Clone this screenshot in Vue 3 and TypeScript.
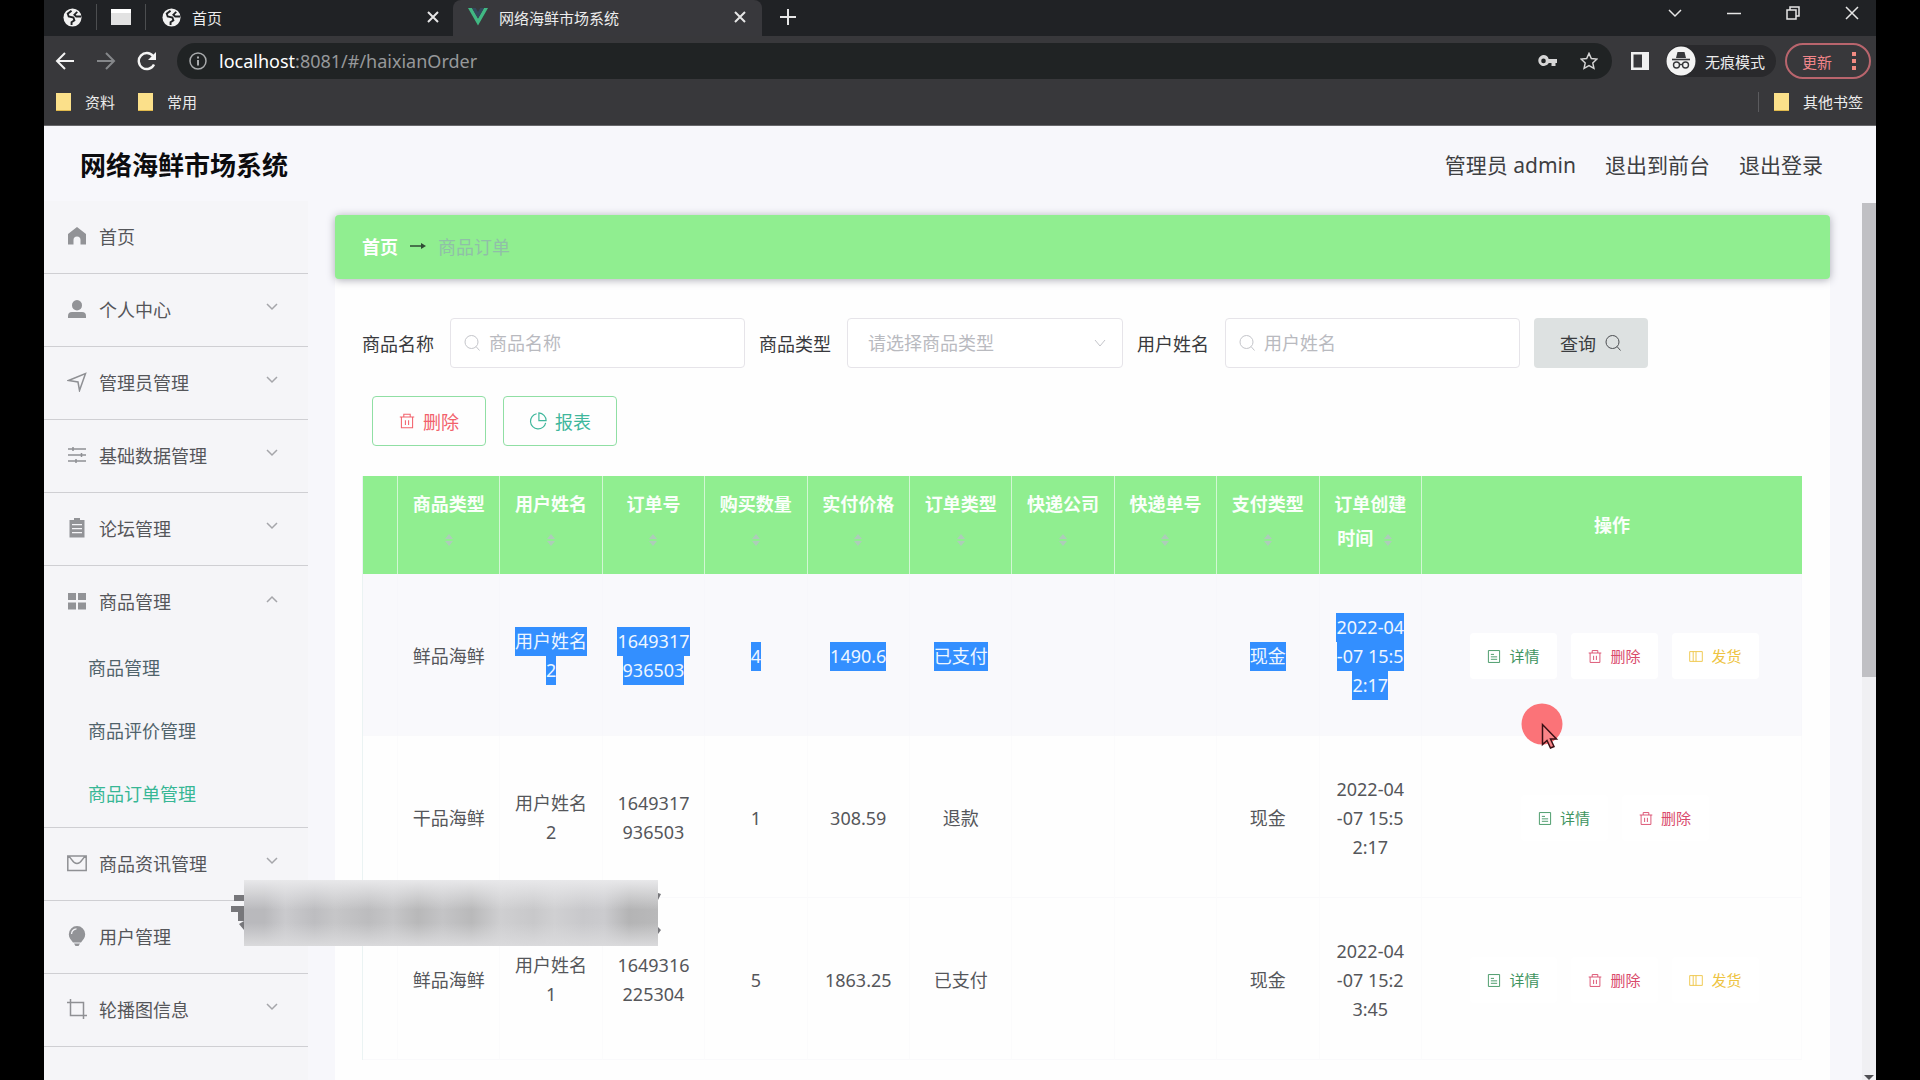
<script setup lang="ts">
import { ref } from 'vue'

interface Glyph { d: string; solid?: boolean }
interface MenuItem { label: string; icon: string; arrow?: boolean; children?: string[] }
interface Cell { lines: string[]; marked?: boolean }
interface Order { cells: Cell[]; ship: boolean; hover?: boolean }

const glyphs: Record<string, Glyph> = {
  home: { solid: true, d: 'M10 1 19 8v10.500h-5.500V14a3.500 3.500 0 0 0-7 0v4.500H1V8z' },
  user: { solid: true, d: 'M10 1a5 5 0 0 1 5 5.500 5 5 0 0 1-10 0A5 5 0 0 1 10 1zM1 19v-2a4 4 0 0 1 4-4h10a4 4 0 0 1 4 4v2z' },
  plane: { d: 'M1.500 8.500 18.500 1.500 12.500 18.500 11 10z' },
  sliders: { d: 'M1 4h18M1 10h18M1 16h18M6 2v4M5 4h2M14.500 8v4M13.500 10h2M9 14v4M8 16h2' },
  clipboard: { solid: true, d: 'M7 0h6v2h4.500v17.500h-15V2H7zM5 6v1.300h10V6zM5 10v1.300h10V10zM5 14v1.300h10V14z' },
  grid: { solid: true, d: 'M1 2h8v7H1zM11 2h8v7h-8zM1 11.500h8v7H1zM11 11.500h8v7h-8z' },
  mail: { d: 'M.800 3h18.400v14.500H.800zM1 3.500c4 .500 4 7 9 7s5-6.500 9-7' },
  bulb: { solid: true, d: 'M10 0a8.200 8.200 0 0 1 8.200 8.200c0 3.500-2.200 5.600-4.200 8.300H6C4 13.800 1.800 11.700 1.800 8.200A8.200 8.200 0 0 1 10 0zM4 8h1.200c0-2.600 1.800-4.400 4.300-4.600V2.200C6.300 2.400 4 4.800 4 8zM7 17.500h6L11.500 20h-3z' },
  crop: { d: 'M3.500 0v16.500H20M0 3.500h16.500V20' },
  doc: { d: 'M2 1.500h16v17H2zM5.500 7H10M5.500 10.500h9M5.500 14h9' },
  trash: { d: 'M1 5h18M3 5v13.500h14V5M6 5V1.500h8V5M8 9v6M12 9v6' },
  book: { d: 'M1 3h18v14H1zM10 3v14M6 3v14' },
  pie: { d: 'M8.500 2A8.500 8.500 0 1 0 18.500 12M11 1v8.500h8A8.500 8.500 0 0 0 11 1z' },
}

const menu: MenuItem[] = [
  { label: '首页', icon: 'home' },
  { label: '个人中心', icon: 'user', arrow: true },
  { label: '管理员管理', icon: 'plane', arrow: true },
  { label: '基础数据管理', icon: 'sliders', arrow: true },
  { label: '论坛管理', icon: 'clipboard', arrow: true },
  { label: '商品管理', icon: 'grid', arrow: true, children: ['商品管理', '商品评价管理', '商品订单管理'] },
  { label: '商品资讯管理', icon: 'mail', arrow: true },
  { label: '用户管理', icon: 'bulb' },
  { label: '轮播图信息', icon: 'crop', arrow: true },
]

const columns: string[][] = [
  ['商品类型', ''], ['用户姓名', ''], ['订单号', ''], ['购买数量', ''], ['实付价格', ''],
  ['订单类型', ''], ['快递公司', ''], ['快递单号', ''], ['支付类型', ''], ['订单创建', '时间'],
]

function order(hover: boolean, ship: boolean, ...values: string[]): Order {
  return {
    hover,
    ship,
    cells: values.map((v, i) => ({ lines: v ? v.split('|') : [], marked: hover && i > 0 })),
  }
}

const orders: Order[] = [
  order(true, true, '鲜品海鲜', '用户姓名|2', '1649317|936503', '4', '1490.6', '已支付', '', '', '现金', '2022-04|-07 15:5|2:17'),
  order(false, false, '干品海鲜', '用户姓名|2', '1649317|936503', '1', '308.59', '退款', '', '', '现金', '2022-04|-07 15:5|2:17'),
  order(false, true, '鲜品海鲜', '用户姓名|1', '1649316|225304', '5', '1863.25', '已支付', '', '', '现金', '2022-04|-07 15:2|3:45'),
]

const goodsName = ref('')
const goodsType = ref('')
const userName = ref('')
</script>

<template>
  <div class="window">
    <header class="chrome">
      <div class="tabs">
        <button class="pin" aria-label="固定标签页">
          <svg class="globe" viewBox="0 0 20 20"><circle cx="10" cy="10" r="9.500" fill="#f1f1f1" /><path d="M9 3 5 6l1 3 5 1 1 3-3 2v3M15 4l-3 3 2 2h5" stroke="#202224" stroke-width="2" /></svg>
        </button>
        <span class="tab-split"></span>
        <button class="pin" aria-label="窗口"><svg width="20" height="16" viewBox="0 0 20 16"><path fill="#e2e2e2" d="M0 0h20v16H0z" /><path fill="#fff" d="M0 0h20v4H0z" /></svg></button>
        <span class="tab-split"></span>
        <div class="tab">
          <svg class="globe" viewBox="0 0 20 20"><circle cx="10" cy="10" r="9.500" fill="#f1f1f1" /><path d="M9 3 5 6l1 3 5 1 1 3-3 2v3M15 4l-3 3 2 2h5" stroke="#202224" stroke-width="2" /></svg>
          <span class="tab-name">首页</span>
          <button class="close" aria-label="关闭"><svg width="12" height="12" viewBox="0 0 12 12"><path d="M1 1l10 10M11 1 1 11" /></svg></button>
        </div>
        <div class="tab active">
          <svg width="20" height="18" viewBox="0 0 20 18"><path fill="#41b883" d="M0 0h4l6 10.500L16 0h4L10 17.500z" /><path fill="#35495e" d="M4 0h3.700L10 4l2.300-4H16l-6 10.500z" /></svg>
          <span class="tab-name">网络海鲜市场系统</span>
          <button class="close" aria-label="关闭"><svg width="12" height="12" viewBox="0 0 12 12"><path d="M1 1l10 10M11 1 1 11" /></svg></button>
        </div>
        <button class="new-tab" aria-label="新标签页"><svg width="16" height="16" viewBox="0 0 16 16"><path d="M8 0v16M0 8h16" /></svg></button>
        <div class="controls">
          <button aria-label="搜索标签页"><svg width="14" height="14" viewBox="0 0 14 14"><path d="M1 4l6 6 6-6" /></svg></button>
          <button aria-label="最小化"><svg width="14" height="14" viewBox="0 0 14 14"><path d="M0 7.500h14" /></svg></button>
          <button aria-label="还原"><svg width="14" height="14" viewBox="0 0 14 14"><path d="M1 4h9v9H1zM4 4V1h9v9h-3" /></svg></button>
          <button aria-label="关闭窗口"><svg width="14" height="14" viewBox="0 0 14 14"><path d="M1 1l12 12M13 1 1 13" /></svg></button>
        </div>
      </div>

      <div class="toolbar">
        <button aria-label="后退"><svg width="20" height="20" viewBox="0 0 20 20"><path d="M19 10H2M10 2l-8 8 8 8" stroke="#f4f4f4" stroke-width="2" /></svg></button>
        <button aria-label="前进"><svg width="20" height="20" viewBox="0 0 20 20"><path d="M1 10h17M10 2l8 8-8 8" stroke="#85878a" stroke-width="2" /></svg></button>
        <button aria-label="刷新"><svg width="20" height="20" viewBox="0 0 20 20"><path d="M17 13.500A8 8 0 1 1 16 5" stroke="#f4f4f4" stroke-width="2.400" /><path d="M19 1v8h-8z" fill="#f4f4f4" /></svg></button>
        <div class="omnibox">
          <svg width="18" height="18" viewBox="0 0 18 18"><circle cx="9" cy="9" r="8" stroke="#a9abad" stroke-width="1.500" /><path d="M9 8v5.500M9 4.500v2" stroke="#a9abad" stroke-width="2" /></svg>
          <span class="url"><b>localhost</b>:8081/#/haixianOrder</span>
          <svg class="key" width="20" height="12" viewBox="0 0 20 12"><path fill="#d6d6d6" fill-rule="evenodd" d="M5.500 0a5.500 5.500 0 0 1 5.200 4H19v4h-1.500v3h-4V8h-2.800A5.500 5.500 0 1 1 5.500 0zm0 3.600a2.300 2.300 0 1 0 0 4.600 2.300 2.300 0 0 0 0-4.600z" /></svg>
          <svg width="18" height="18" viewBox="0 0 20 20"><path d="M10 1.500l2.600 5.700 6.200.700-4.600 4.200 1.300 6.100L10 15.100l-5.500 3.100 1.300-6.100L1.200 7.900l6.200-.700z" stroke="#d6d6d6" stroke-width="1.600" /></svg>
        </div>
        <button class="panel" aria-label="侧边栏"><svg width="18" height="18" viewBox="0 0 18 18"><path fill="#f0f0f0" fill-rule="evenodd" d="M0 0h18v18H0zM2.500 2.500v13H11v-13z" /></svg></button>
        <button class="incognito">
          <svg width="30" height="30" viewBox="0 0 30 30"><circle cx="15" cy="15" r="14.500" fill="#f3f3f3" /><path d="M10 12l1.500-6h7l1.500 6z" fill="#37383b" /><path d="M6 13.500h18" stroke="#37383b" stroke-width="1.600" /><g stroke="#37383b" stroke-width="1.400"><circle cx="10.500" cy="19" r="3" /><circle cx="19.500" cy="19" r="3" /><path d="M13.500 18.500h3" /></g></svg>
          无痕模式
        </button>
        <button class="update">更新<svg width="4" height="18" viewBox="0 0 4 18"><path fill="#f28b82" d="M0 0h4v4H0zM0 7h4v4H0zM0 14h4v4H0z" /></svg></button>
      </div>

      <nav class="bookmarks">
        <a href="#"><i class="folder"></i>资料</a>
        <a href="#"><i class="folder"></i>常用</a>
        <a href="#" class="other"><i class="folder"></i>其他书签</a>
      </nav>
    </header>

    <div class="page">
      <header class="top">
        <h1>网络海鲜市场系统</h1>
        <span>管理员 admin</span>
        <a href="#">退出到前台</a>
        <a href="#">退出登录</a>
      </header>

      <div class="body">
        <aside class="side">
          <div v-for="item in menu" :key="item.label" class="group">
            <a href="#" class="item">
              <svg width="20" height="20" viewBox="0 0 20 20" :class="{ solid: glyphs[item.icon].solid }"><path :d="glyphs[item.icon].d" /></svg>
              <span>{{ item.label }}</span>
              <svg v-if="item.arrow" class="arrow" :class="{ up: item.children }" width="12" height="8" viewBox="0 0 12 8"><path d="M1 1l5 5 5-5" /></svg>
            </a>
            <a v-for="(child, i) in item.children" :key="child" href="#" class="child" :class="{ current: i === 2 }">{{ child }}</a>
          </div>
        </aside>

        <main class="card">
          <nav class="crumbs">
            <a href="#">首页</a>
            <svg width="16" height="8" viewBox="0 0 16 8"><path d="M0 4h14" stroke="#2f4a35" stroke-width="1.500" /><path d="M11 1l5 3-5 3z" fill="#2f4a35" /></svg>
            <span>商品订单</span>
          </nav>

          <form class="search" @submit.prevent>
            <label for="goods-name">商品名称</label>
            <div class="field">
              <svg class="lens" viewBox="0 0 18 18"><circle cx="8.500" cy="8" r="6.500" /><path d="M13 12.500l3.500 4" /></svg>
              <input id="goods-name" v-model="goodsName" placeholder="商品名称">
            </div>
            <label for="goods-type">商品类型</label>
            <div class="field narrow">
              <select id="goods-type" v-model="goodsType"><option value="">请选择商品类型</option></select>
              <svg class="down" width="12" height="8" viewBox="0 0 12 8"><path d="M1 1l5 6 5-6" /></svg>
            </div>
            <label for="user-name">用户姓名</label>
            <div class="field">
              <svg class="lens" viewBox="0 0 18 18"><circle cx="8.500" cy="8" r="6.500" /><path d="M13 12.500l3.500 4" /></svg>
              <input id="user-name" v-model="userName" placeholder="用户姓名">
            </div>
            <button class="query">查询<svg width="18" height="18" viewBox="0 0 18 18"><circle cx="8.500" cy="8" r="6.500" /><path d="M13 12.500l3.500 4" /></svg></button>
          </form>

          <div class="tools">
            <button class="remove"><svg width="16" height="18" viewBox="0 0 20 20"><path :d="glyphs.trash.d" /></svg>删除</button>
            <button class="report"><svg width="18" height="18" viewBox="0 0 20 20"><path :d="glyphs.pie.d" /></svg>报表</button>
          </div>

          <table>
            <colgroup>
              <col class="c-select">
              <col v-for="col in columns" :key="col[0]" class="c-data">
              <col class="c-action">
            </colgroup>
            <thead>
              <tr>
                <th></th>
                <th v-for="col in columns" :key="col[0]">
                  {{ col[0] }}<br>{{ col[1] }}<svg class="sort" width="30" height="14" viewBox="0 0 30 14"><path d="M11 6l4-5 4 5zM11 8l4 5 4-5z" /></svg>
                </th>
                <th class="action">操作</th>
              </tr>
            </thead>
            <tbody>
              <tr v-for="(row, r) in orders" :key="r" :class="{ hover: row.hover }">
                <td></td>
                <td v-for="(cell, c) in row.cells" :key="c">
                  <template v-for="(line, l) in cell.lines" :key="l"><br v-if="l"><span :class="{ marked: cell.marked }">{{ line }}</span></template>
                </td>
                <td>
                  <div class="ops">
                    <button class="detail"><svg width="14" height="15" viewBox="0 0 20 20"><path :d="glyphs.doc.d" /></svg>详情</button>
                    <button class="delete"><svg width="14" height="15" viewBox="0 0 20 20"><path :d="glyphs.trash.d" /></svg>删除</button>
                    <button v-if="row.ship" class="ship"><svg width="14" height="15" viewBox="0 0 20 20"><path :d="glyphs.book.d" /></svg>发货</button>
                  </div>
                </td>
              </tr>
            </tbody>
          </table>
        </main>

        <div class="scroll"><div class="thumb"></div><i></i></div>
      </div>
    </div>

    <div class="mosaic">
      <svg width="14" height="38" viewBox="0 0 14 38"><path fill="#77777b" d="M4 1h10v6H4zM1 12h13v6H1zM8 18h6v9H8zM9 30l5-3v9z" /></svg>
      <span class="veil"></span>
      <svg width="5" height="44" viewBox="0 0 5 44"><path fill="#77777b" d="M0 2l3 1-3 6zM0 36l3 3-3 4z" /></svg>
    </div>

    <svg class="pointer" width="42" height="46" viewBox="0 0 42 46">
      <circle cx="21" cy="21" r="20.500" fill="#fb7378" />
      <path d="M21.500 21.500v20l4.500-4 3.500 7.500 3.500-1.500-3.500-7.500h6z" fill="#fb8488" stroke="#3a1015" stroke-width="1.500" />
    </svg>
  </div>
</template>

<style>
body {
  background: #000;
  margin: 0;
}
</style>

<style scoped>
* {
  box-sizing: border-box;
}

.window {
  position: relative;
  display: flex;
  flex-direction: column;
  height: 100vh;
  margin: 0 44px;
  overflow: hidden;
  font-family: "Noto Sans", "Noto Sans CJK SC", sans-serif;
  font-size: 18px;
  color: #55565a;
}

button {
  display: flex;
  align-items: center;
  justify-content: center;
  padding: 0;
  border: 0;
  background: none;
  color: inherit;
  font: inherit;
}

a {
  color: inherit;
  text-decoration: none;
}

svg {
  flex: none;
  fill: none;
}

/* browser frame */
.chrome {
  flex: none;
  background: #38383b;
  color: #ececec;
  font-size: 15px;
  border-bottom: 1px solid #67676a;
}

.tabs {
  display: flex;
  height: 36px;
  align-items: center;
  padding: 0 0 2px 8px;
  background: #202225;
}

.pin {
  width: 40px;
  height: 34px;
}

.globe {
  width: 19px;
  height: 19px;
}

.tab-split {
  width: 1px;
  height: 26px;
  margin: 0 4px;
  background: #4c4e50;
}

.tab {
  display: flex;
  align-items: center;
  gap: 11px;
  width: 303px;
  height: 34px;
  padding: 0 14px 0 12px;
}

.tab.active {
  width: 309px;
  padding: 0 16px 0 15px;
  background: #38383c;
  border-radius: 8px 8px 0 0;
  box-shadow: 0 2px #38383c;
}

.tab-name {
  flex: 1;
  white-space: nowrap;
}

.close svg,
.new-tab svg,
.controls svg {
  stroke: #e6e6e6;
  stroke-width: 1.500;
}

.close svg,
.new-tab svg {
  stroke-width: 2;
}

.new-tab {
  margin-left: 18px;
}

.controls {
  display: flex;
  gap: 45px;
  margin: 0 17px 8px auto;
}

.toolbar {
  display: flex;
  align-items: center;
  height: 50px;
  padding: 0 5px 0 11px;
}

.toolbar > button + button {
  margin-left: 21px;
}

.omnibox {
  display: flex;
  flex: 1;
  align-items: center;
  height: 36px;
  margin: 0 19px 0 20px;
  padding: 0 14px 0 12px;
  border-radius: 18px;
  background: #202324;
}

.url {
  flex: 1;
  margin-left: 12px;
  font-size: 18px;
  color: #96989a;
}

.url b {
  font-weight: 400;
  color: #fff;
}

.key {
  margin-right: 22px;
}

.toolbar > .incognito {
  gap: 9px;
  height: 32px;
  margin-left: 17px;
  padding-right: 11px;
  border-radius: 16px;
  background: #29292c;
}

.toolbar > .update {
  gap: 20px;
  width: 86px;
  height: 36px;
  margin-left: 9px;
  padding-left: 2px;
  border: 2px solid #b9656d;
  border-radius: 18px;
  color: #f0858a;
}

.bookmarks {
  display: flex;
  align-items: center;
  gap: 23px;
  height: 39px;
  padding: 0 13px 7px 12px;
}

.bookmarks a {
  display: flex;
  align-items: center;
  gap: 14px;
  line-height: 20px;
}

.bookmarks .other {
  margin-left: auto;
  padding-left: 15px;
  border-left: 1px solid #5b5b5e;
}

.folder {
  width: 15px;
  height: 18px;
  background: #fbe08a;
  border-bottom: 1px solid #e0b94c;
}

/* application */
.page {
  display: flex;
  flex: 1;
  flex-direction: column;
  min-height: 0;
  background: #f7f7fb;
}

.top {
  display: flex;
  flex: none;
  align-items: center;
  gap: 29px;
  height: 75px;
  padding: 0 53px 0 36px;
  font-size: 21px;
  color: #3e3f42;
}

h1 {
  margin: 0 auto 0 0;
  font-size: 26px;
  font-weight: 700;
  color: #0c0c0e;
}

.body {
  display: flex;
  flex: 1;
  min-height: 0;
}

.side {
  flex: none;
  width: 264px;
  background: #f5f5f8;
}

.group {
  border-bottom: 1px solid #cfcfd3;
}

.item {
  display: flex;
  align-items: center;
  gap: 12px;
  height: 72px;
  padding: 0 30px 2px 23px;
}

.item svg {
  stroke: #8f9094;
  stroke-width: 1.500;
}

.item svg.solid {
  fill: #929397;
  fill-rule: evenodd;
  stroke: none;
}

.item .arrow {
  margin: 0 0 4px auto;
  stroke: #a5a6aa;
}

.item .up {
  transform: rotate(180deg);
}

.child {
  display: block;
  height: 63px;
  padding-left: 44px;
  line-height: 61px;
  color: #50636b;
}

.child.current {
  color: #37b795;
}

.card {
  flex: 1;
  min-width: 0;
  margin: 14px 32px 0 27px;
  background: #fefefe;
}

.crumbs {
  display: flex;
  align-items: center;
  gap: 12px;
  height: 64px;
  padding: 0 0 2px 27px;
  border-radius: 4px;
  background: #90ee90;
  box-shadow: 0 1px 8px #a9a9b4;
  color: #90bfa8;
}

.crumbs a {
  font-weight: 700;
  color: #fff;
}

.search {
  display: flex;
  align-items: center;
  gap: 14px;
  margin: 39px 28px 0 27px;
}

.search label {
  margin-right: 2px;
  color: #38393c;
}

.field {
  position: relative;
  width: 295px;
}

.field.narrow {
  width: 276px;
}

.field input,
.field select {
  display: block;
  width: 100%;
  height: 50px;
  padding: 0 12px 0 38px;
  border: 1px solid #e6e4e9;
  border-radius: 4px;
  outline: 0;
  appearance: none;
  background: #fff;
  color: #b9babf;
  font: inherit;
}

.field select {
  padding-left: 20px;
}

.field input::placeholder {
  color: #b9babf;
}

.lens {
  position: absolute;
  top: 16px;
  left: 13px;
  width: 18px;
  height: 18px;
  stroke: #c4c5ca;
}

.down {
  position: absolute;
  top: 21px;
  right: 17px;
  stroke: #c4c5ca;
}

.query {
  gap: 8px;
  width: 114px;
  height: 50px;
  border-radius: 4px;
  background: #dde1e1;
  color: #3b3d40;
}

.query svg {
  stroke: #4c4e52;
}

.tools {
  display: flex;
  gap: 17px;
  margin: 28px 37px 30px;
}

.tools button {
  gap: 8px;
  width: 114px;
  height: 50px;
  border: 1px solid #90dfa4;
  border-radius: 4px;
}

.tools svg,
.ops svg {
  stroke: currentColor;
  stroke-width: 1.300;
}

.tools .remove {
  color: #f2616b;
}

.tools .report {
  color: #3fb79c;
}

table {
  width: calc(100% - 55px);
  margin-left: 27px;
  border-left: 1px solid #ebf3f3;
  border-collapse: separate;
  border-spacing: 0;
  table-layout: fixed;
  text-align: center;
}

.c-select {
  width: 35px;
}

.c-action {
  width: 380px;
}

th {
  height: 98px;
  padding: 11px 0 19px;
  border-right: 1px solid #d2f7d4;
  background: #90ee90;
  color: #fafffa;
  font-weight: 700;
  line-height: 34px;
}

th.action {
  padding: 0;
  border-right: 0;
}

.sort {
  vertical-align: middle;
  fill: #adcdb9;
}

td {
  height: 162px;
  padding: 3px 0 0;
  border-right: 1px solid #fbfbfc;
  border-bottom: 1px solid #f9f9fb;
  line-height: 29px;
}

.hover td {
  background: #f9f9fc;
  border-right-color: #f7f7fb;
}

.marked {
  display: inline-block;
  background: #338fff;
  color: #eef6ff;
}

.ops {
  display: flex;
  justify-content: center;
  gap: 14px;
  padding-left: 6px;
}

.ops button {
  gap: 8px;
  width: 87px;
  height: 46px;
  border-radius: 4px;
  background: #fff;
  font-size: 15px;
}

.detail {
  color: #3e9460;
}

.delete {
  color: #d94a6b;
}

.ship {
  color: #eec443;
}

.scroll {
  display: flex;
  flex: none;
  flex-direction: column;
  align-items: center;
  justify-content: space-between;
  width: 14px;
  margin-top: 2px;
  background: #f0f0f3;
}

.thumb {
  width: 14px;
  height: 54%;
  background: #c0c0c4;
}

.scroll i {
  border: 5px solid transparent;
  border-top-color: #505054;
  border-bottom: 0;
}

/* overlays */
.mosaic {
  position: absolute;
  top: 880px;
  left: 186px;
  display: flex;
  align-items: center;
  height: 66px;
}

.veil {
  width: 414px;
  height: 66px;
  background:
    linear-gradient(#e8e8ea 0%, #dedee000 45%, #dedee000 65%, #dadadc 100%),
    linear-gradient(90deg, #b9b9bd 0%, #b9b9bc 5%, #cacacd 10%, #bdbdc0 17%, #c6c6c8 22%, #bcbcbe 30%, #c6c6c8 36%, #b8b8b9 42%, #c4c4c6 48%, #b9b9ba 55%, #cfcfd1 62%, #c8c8ca 70%, #d0d0d2 75%, #c8c8cb 82%, #cbcbce 87%, #b4b4b5 93%, #b9b9ba 100%);
}

.pointer {
  position: absolute;
  top: 703px;
  left: 1477px;
}
</style>
